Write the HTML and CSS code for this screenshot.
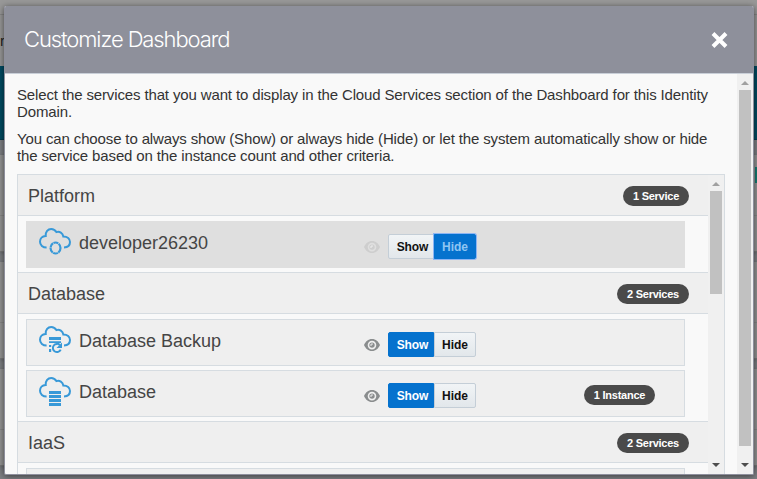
FILE: index.html
```html
<!DOCTYPE html>
<html lang="en">
<head>
<meta charset="utf-8">
<title>Customize Dashboard</title>
<link rel="stylesheet" href="styles.css">
</head>
<body>
<svg width="0" height="0" class="defs">
  <symbol id="cloud" viewBox="0 0.500 32 30"><path d="M7.600 20.100C3.800 20.100 1 17.500 1 14.300c0-3.200 2.300-5.600 5.700-5.800C6.300 4.200 9 1.500 12.200 1.500c2.500 0 4.200 1.400 5.200 3.100 3.200-1 6.400 1 6.900 4.300 4 .1 6.700 2.500 6.700 5.700 0 3.100-2.300 5.300-6 5.500" fill="none" stroke="#3899d8" stroke-width="2"/></symbol>
  <symbol id="eye" viewBox="0 0 16 12"><path fill-rule="evenodd" d="M8 0C4.200 0 1.500 2.600 0 6c1.500 3.400 4.200 6 8 6s6.500-2.600 8-6c-1.500-3.400-4.200-6-8-6zm0 1.800a4.300 4.300 0 1 1 0 8.600 4.300 4.300 0 0 1 0-8.600z" /><circle cx="8" cy="6.100" r="2.700"/><path d="M8 4.100v1.900H6" fill="none" stroke="#efefef" stroke-width="1"/></symbol>
</svg>
<div class="backdrop">
  <div class="strip"></div>
  <div class="top">r</div>
  <div class="banner"></div>
  <div class="card first"><i class="chip"></i></div>
  <div class="card"></div>
  <div class="card"></div>
</div>
<div class="dialog">
  <header class="titlebar">
    <h1>Customize Dashboard</h1>
    <svg class="close" width="17" height="16" viewBox="0 0 17 16"><path d="M2 1.500l13 13M15 1.500l-13 13" stroke="#fff" stroke-width="4"/></svg>
  </header>
  <div class="body">
    <div class="content">
      <p>Select the services that you want to display in the Cloud Services section of the Dashboard for this Identity<br>Domain.</p>
      <p>You can choose to always show (Show) or always hide (Hide) or let the system automatically show or hide<br>the service based on the instance count and other criteria.</p>
      <div class="list">
        <div class="groups">
          <section>
            <div class="group"><h2>Platform</h2><span class="badge one">1 Service</span></div>
            <div class="items">
              <div class="item off">
                <svg class="icon" width="32" height="30"><use href="#cloud"/><ellipse cx="16.500" cy="20" rx="5" ry="5.500" fill="none" stroke="#3899d8" stroke-width="2.200" stroke-dasharray="5 .5"/></svg>
                <span class="name">developer26230</span>
                <svg class="eye"><use href="#eye"/></svg>
                <div class="toggle"><button>Show</button><button class="focus">Hide</button></div>
              </div>
            </div>
          </section>
          <section>
            <div class="group"><h2>Database</h2><span class="badge">2 Services</span></div>
            <div class="items">
              <div class="item">
                <svg class="icon" width="32" height="30"><use href="#cloud"/><path d="M10 11h12v3H10zM10 15.200h12V17H10zM10 19h2.200v2H10zM10 23h2.200v3H10z" fill="#3899d8"/><path d="M20.800 19a4.100 4.100 0 1 0 .9 4.700" fill="none" stroke="#3899d8" stroke-width="2"/><path d="M23 16.600v5.500h-5.500z" fill="#3899d8"/></svg>
                <span class="name">Database Backup</span>
                <svg class="eye"><use href="#eye"/></svg>
                <div class="toggle"><button class="on">Show</button><button>Hide</button></div>
              </div>
              <div class="item">
                <svg class="icon" width="32" height="30"><use href="#cloud"/><path d="M10 14h12v3H10zM10 18h12v3H10zM10 22h12v3H10zM10 26h12v3H10z" fill="#3899d8"/></svg>
                <span class="name">Database</span>
                <svg class="eye"><use href="#eye"/></svg>
                <div class="toggle"><button class="on">Show</button><button>Hide</button></div>
                <span class="badge instance">1 Instance</span>
              </div>
            </div>
          </section>
          <section>
            <div class="group"><h2>IaaS</h2><span class="badge">2 Services</span></div>
            <div class="items"><div class="item"></div></div>
          </section>
        </div>
        <div class="scroll inner"><i class="up"></i><b class="thumb"></b><i class="down"></i></div>
      </div>
    </div>
    <div class="scroll"><i class="up"></i><b class="thumb"></b><i class="down"></i></div>
  </div>
</div>
</body>
</html>
```

FILE: styles.css
```css
* { box-sizing: border-box; }
html, body { height: 100%; overflow: hidden; }
body { margin: 0; position: relative; background: #7d7f83; font-family: "Liberation Sans", Arial, sans-serif; color: #333; }
.defs { position: absolute; }
.backdrop { height: 479px; overflow: hidden; }
.strip { height: 15px; background: #989898; border-bottom: 1px solid #858585; }
.top { height: 51px; padding-top: 17px; background: #969696; font-size: 15px; color: #222; }
.banner { height: 74px; background: #004a61; border-bottom: 1px solid #003b50; }
.card { height: 97px; margin-bottom: 10px; background: linear-gradient(#858585, #858585) 0 60px / 100% 1px no-repeat #929292; border-bottom: 1px solid #777; box-shadow: 0 1px 4px #606266; }
.card.first { margin-top: 15px; display: flex; justify-content: flex-end; }
.chip { width: 2px; height: 16px; margin-top: 12px; background: #14796f; }
.dialog { position: absolute; left: 4px; top: 6px; width: 750px; height: 469px; display: flex; flex-direction: column; background: #f9f9f9; border: 1px solid #8e8f9c; border-top: 0; border-radius: 2px; box-shadow: 0 1px 6px rgba(0,0,0,.55); overflow: hidden; }
.titlebar { flex: none; height: 68px; display: flex; align-items: center; justify-content: space-between; padding: 0 25px 0 19px; background: #8e909b; border-bottom: 1px solid #c9cfd8; }
h1 { margin: -2px 0 0; font-family: Inter, "Open Sans", sans-serif; font-weight: 300; font-size: 22px; letter-spacing: -1.100px; color: #fff; }
.body { flex: 1; min-height: 0; display: flex; }
.content { flex: 1; min-width: 0; padding: 12px 12px 0; display: flex; flex-direction: column; }
p { margin: 0 0 10px; font-size: 15px; line-height: 17px; letter-spacing: -.133px; white-space: nowrap; }
.list { height: 320px; flex: none; display: flex; border: 1px solid #d6dce1; border-bottom: 0; }
.groups { flex: 1; min-width: 0; margin-top: -1px; }
.group { height: 42px; display: flex; align-items: center; justify-content: space-between; padding: 2px 19px 0 10px; background: #efefef; border: solid #d6dce1; border-width: 1px 0; }
h2, .name { margin: 0; font-weight: 400; font-size: 18px; color: #454545; }
.items { display: grid; gap: 4px; padding: 5px 23px 4px 8px; }
.item { height: 47px; display: grid; grid-template-columns: 40px 285px 24px 196px auto; align-items: center; justify-content: start; padding-left: 12px; background: #efefef; border: 1px solid #d6dce1; }
.off { background: #dfdfdf; border-color: #dfdfdf; }
.icon { margin-top: -3px; overflow: visible; }
.name { margin-top: -3px; }
.eye { width: 16px; height: 12px; margin-top: 5px; fill: #8a8d8e; }
.off .eye { fill: #cecece; }
.toggle { display: flex; margin-top: 4px; width: 88px; height: 25px; }
button { width: 42px; padding: 0; font: bold 12px "Liberation Sans", Arial, sans-serif; color: #111; background: linear-gradient(#f1f4f6, #e2e7eb); border: 1px solid #c4ced7; border-radius: 0 2px 2px 0; }
button:first-child { width: 46px; padding-left: 3px; letter-spacing: -.1px; border-radius: 2px 0 0 2px; }
button.on { color: #fff; background: #0572ce; border-color: #0572ce; }
button.focus { color: #8fc5f2; background: #0572ce; border-color: #0572ce; box-shadow: 0 0 0 1px #8db5f3; }
.badge { width: 72px; height: 20px; border-radius: 10px; background: #4a4a4a; color: #fff; font-weight: bold; font-size: 11px; line-height: 20px; text-align: center; letter-spacing: -.250px; }
.one { width: 66px; }
.instance { width: 71px; margin-top: 3px; }
.scroll { width: 16px; flex: none; display: flex; flex-direction: column; align-items: center; background: #f0f0f0; }
.up, .down { border: 4px solid transparent; }
.up { border-top: 0; border-bottom-color: #a0a0a0; margin-top: 7px; }
.down { border-bottom: 0; border-top-color: #4d4d4d; margin-top: auto; margin-bottom: 7px; }
.thumb { width: 12px; height: 356px; margin-top: 5px; background: #c1c1c1; }
.inner { height: 299px; }
.inner .thumb { height: 103px; }
```
